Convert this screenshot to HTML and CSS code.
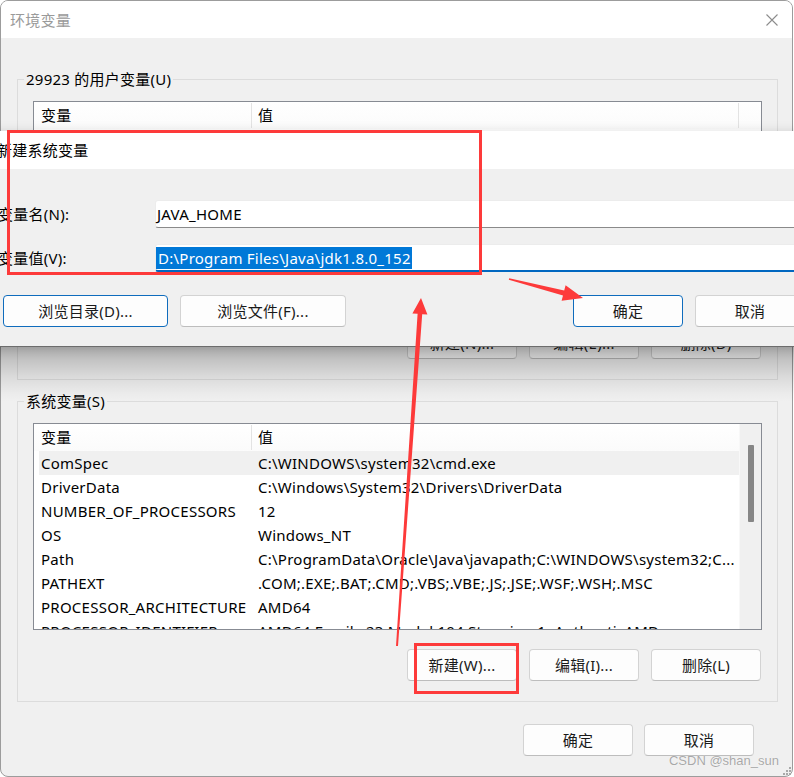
FILE: index.html
```html
<!DOCTYPE html>
<html lang="zh-CN">
<head>
<meta charset="utf-8">
<title>环境变量</title>
<link rel="stylesheet" href="styles.css">
</head>
<body>
<div class="window">
  <div class="titlebar">
    <span class="title">环境变量</span>
    <svg class="close" width="12" height="12" viewBox="0 0 12 12"><path d="M0.5 0.5L11.5 11.5M11.5 0.5L0.5 11.5" stroke="#8c8c8c" stroke-width="1.1" fill="none"/></svg>
  </div>
  <div class="content">
    <fieldset class="group group-user">
      <legend>29923 的用户变量(U)</legend>
      <div class="list">
        <div class="list-main">
          <div class="list-head">
            <div class="hc hc1">变量</div>
            <div class="hc hc2">值</div>
            <div class="hc hc3"></div>
          </div>
        </div>
      </div>
      <div class="btnrow">
        <button class="btn">新建(N)...</button>
        <button class="btn">编辑(E)...</button>
        <button class="btn">删除(D)</button>
      </div>
    </fieldset>

    <fieldset class="group group-sys">
      <legend>系统变量(S)</legend>
      <div class="list">
        <div class="list-main">
          <div class="list-head">
            <div class="hc hc1">变量</div>
            <div class="hc hc2 hc2-sys">值</div>
          </div>
          <div class="rows">
            <div class="row row-hot"><div class="c1">ComSpec</div><div class="c2">C:\WINDOWS\system32\cmd.exe</div></div>
            <div class="row"><div class="c1">DriverData</div><div class="c2">C:\Windows\System32\Drivers\DriverData</div></div>
            <div class="row"><div class="c1">NUMBER_OF_PROCESSORS</div><div class="c2">12</div></div>
            <div class="row"><div class="c1">OS</div><div class="c2">Windows_NT</div></div>
            <div class="row"><div class="c1">Path</div><div class="c2">C:\ProgramData\Oracle\Java\javapath;C:\WINDOWS\system32;C...</div></div>
            <div class="row"><div class="c1">PATHEXT</div><div class="c2">.COM;.EXE;.BAT;.CMD;.VBS;.VBE;.JS;.JSE;.WSF;.WSH;.MSC</div></div>
            <div class="row"><div class="c1">PROCESSOR_ARCHITECTURE</div><div class="c2">AMD64</div></div>
            <div class="row"><div class="c1">PROCESSOR_IDENTIFIER</div><div class="c2">AMD64 Family 23 Model 104 Stepping 1, AuthenticAMD</div></div>
          </div>
        </div>
        <div class="vscroll"><div class="thumb"></div></div>
      </div>
      <div class="btnrow">
        <button class="btn">新建(W)...</button>
        <button class="btn">编辑(I)...</button>
        <button class="btn">删除(L)</button>
      </div>
    </fieldset>

    <div class="footer">
      <button class="btn">确定</button>
      <button class="btn">取消</button>
    </div>
  </div>
</div>

<div class="dialog">
  <div class="dlg-title">新建系统变量</div>
  <div class="dlg-body">
    <div class="field">
      <label class="flabel">变量名(N):</label>
      <div class="input"><span class="itext">JAVA_HOME</span></div>
    </div>
    <div class="field field-2">
      <label class="flabel">变量值(V):</label>
      <div class="input input-focus"><span class="sel">D:\Program Files\Java\jdk1.8.0_152</span></div>
    </div>
    <div class="dlg-btns">
      <div class="dlg-left">
        <button class="btn btn-focus btn-wide">浏览目录(D)...</button>
        <button class="btn btn-wide2">浏览文件(F)...</button>
      </div>
      <div class="dlg-right">
        <button class="btn btn-focus">确定</button>
        <button class="btn">取消</button>
      </div>
    </div>
  </div>
</div>

<svg class="annot" width="794" height="777" viewBox="0 0 794 777">
  <rect x="8.5" y="131.5" width="472" height="142" fill="none" stroke="#fd3a3a" stroke-width="3"/>
  <rect x="415.5" y="644.5" width="102" height="48" fill="none" stroke="#fd3a3a" stroke-width="3"/>
  <polygon fill="#fd3a3a" points="509.2,278.3 564.2,290.6 565.6,285.3 583,298 561.6,300.7 563,295.4 508.8,279.7"/>
  <polygon fill="#fd3a3a" points="398,646.1 422.2,314.2 427.4,314.5 421,298 412.4,313.5 417.6,313.8 396,645.9"/>
</svg>

<div class="watermark">CSDN @shan_sun</div>
<svg class="grip" width="10" height="10" viewBox="0 0 10 10">
  <rect x="7" y="1" width="2" height="2" fill="#a8a8a8"/>
  <rect x="4" y="4" width="2" height="2" fill="#a8a8a8"/>
  <rect x="7" y="4" width="2" height="2" fill="#a8a8a8"/>
  <rect x="1" y="7" width="2" height="2" fill="#a8a8a8"/>
  <rect x="4" y="7" width="2" height="2" fill="#a8a8a8"/>
  <rect x="7" y="7" width="2" height="2" fill="#a8a8a8"/>
</svg>
</body>
</html>
```
FILE: styles.css
```css
* { box-sizing: border-box; }
html, body { margin: 0; padding: 0; }
body {
  width: 794px;
  height: 777px;
  overflow: hidden;
  position: relative;
  background: #ffffff;
  font-family: "Noto Sans", "Noto Sans CJK SC", sans-serif;
  font-size: 15px;
  letter-spacing: 0.25px;
  color: #000;
}

.window {
  width: 793px;
  height: 777px;
  border: 1px solid #9c9c9c;
  border-radius: 8px;
  overflow: hidden;
  background: #f0f0f0;
}

.titlebar {
  height: 37px;
  background: #ffffff;
  display: flex;
  align-items: center;
  justify-content: space-between;
  padding: 0 14px 0 9px;
}
.title { color: #9a9a9a; line-height: 20px; }
.close { display: block; }

.content { padding: 0 14px 0 16px; }

.group {
  margin: 0;
  border: 1px solid #dcdcdc;
  padding: 12px 15px 20px 15px;
  min-width: 0;
}
.group legend {
  margin-left: -9px;
  padding: 0 2px;
  line-height: 20px;
}
.group-user { margin-top: 31px; }
.group-sys { margin-top: 11px; }

.list {
  height: 207px;
  border: 1px solid #878b93;
  background: #ffffff;
  display: flex;
}
.list-main { flex: 1; overflow: hidden; min-width: 0; }

.list-head {
  height: 27px;
  display: flex;
  background: linear-gradient(#ffffff, #fbfbfb);
}
.hc { line-height: 27px; white-space: nowrap; }
.hc1 { width: 217px; padding-left: 7px; }
.hc2 { width: 487px; border-left: 1px solid #e3e3e3; padding-left: 6px; margin: 1px 0; line-height: 25px; }
.hc2-sys { flex: 1; }
.hc3 { flex: 1; border-left: 1px solid #e3e3e3; margin: 1px 0; }

.rows { padding-left: 5px; }
.row { display: flex; height: 24px; line-height: 24px; white-space: nowrap; }
.row-hot { background: #f0f0f0; }
.c1 { width: 212px; padding-left: 2px; overflow: hidden; }
.c2 { flex: 1; padding-left: 7px; overflow: hidden; }

.vscroll {
  width: 22px;
  background: #f0f0f0;
  border-left: 1px solid #f8f8f8;
  padding-top: 21px;
  display: flex;
  justify-content: center;
}
.thumb { width: 6px; height: 77px; background: #868686; border-radius: 1px; margin-left: 1px; }

.btnrow {
  display: flex;
  justify-content: flex-end;
  gap: 12px;
  margin-top: 19px;
  padding-right: 1px;
}

.btn {
  font: inherit;
  letter-spacing: inherit;
  width: 110px;
  height: 32px;
  padding: 0;
  margin: 0;
  border: 1px solid #d3d3d3;
  border-bottom-color: #bdbdbd;
  border-radius: 4px;
  background: #fdfdfd;
  color: #1a1a1a;
  line-height: 30px;
  white-space: nowrap;
}
.btn-focus { border-color: #0f6cbd; }
.btn-wide { width: 165px; }
.btn-wide2 { width: 166px; }

.footer {
  display: flex;
  justify-content: flex-end;
  gap: 11px;
  margin-top: 22px;
  padding-right: 24px;
}

/* new variable dialog lying over the main window */
.dialog {
  position: absolute;
  left: -10px;
  top: 131px;
  width: 830px;
  background: #f0f0f0;
  border-bottom: 1px solid #9a9a9a;
  z-index: 5;
  box-shadow: 0 0 10px rgba(0, 0, 0, 0.12);
}
.dialog::after {
  content: "";
  position: absolute;
  left: 0;
  right: 0;
  top: 100%;
  height: 56px;
  background: linear-gradient(rgba(0,0,0,0.30) 0%, rgba(0,0,0,0.19) 25%, rgba(0,0,0,0.09) 55%, rgba(0,0,0,0.02) 85%, rgba(0,0,0,0) 100%);
}
.dlg-title {
  height: 38px;
  background: #ffffff;
  padding-left: 7px;
  line-height: 38px;
}
.dlg-body { padding: 31px 15px 19px 0; }
.field { display: flex; align-items: center; }
.field-2 { margin-top: 16px; }
.flabel { width: 165px; padding-left: 8px; line-height: 20px; white-space: nowrap; }
.input {
  flex: 1;
  height: 28px;
  background: #ffffff;
  border: 1px solid #ececec;
  border-bottom-color: #8a8a8a;
  border-radius: 3px 0 0 3px;
  display: flex;
  align-items: center;
  white-space: nowrap;
}
.itext { padding-left: 1px; }
.input-focus { border-bottom: 2px solid #0067c0; }
.sel {
  background: #0078d7;
  color: #ffffff;
  line-height: 22px;
  padding: 0 1px 0 2px;
}
.dlg-btns {
  display: flex;
  justify-content: space-between;
  margin-top: 23px;
  padding-left: 13px;
}
.dlg-left, .dlg-right { display: flex; gap: 12px; }

.annot { position: absolute; left: 0; top: 0; z-index: 10; pointer-events: none; }

.watermark {
  position: absolute;
  right: 15px;
  top: 752px;
  z-index: 11;
  font-family: "Liberation Sans", Arial, sans-serif;
  font-size: 13px;
  letter-spacing: 0;
  line-height: 18px;
  color: rgba(140, 140, 140, 0.75);
  text-shadow: 0 0 1px rgba(255,255,255,0.9);
}
.grip { position: absolute; right: 2px; bottom: 1px; z-index: 11; }
```
